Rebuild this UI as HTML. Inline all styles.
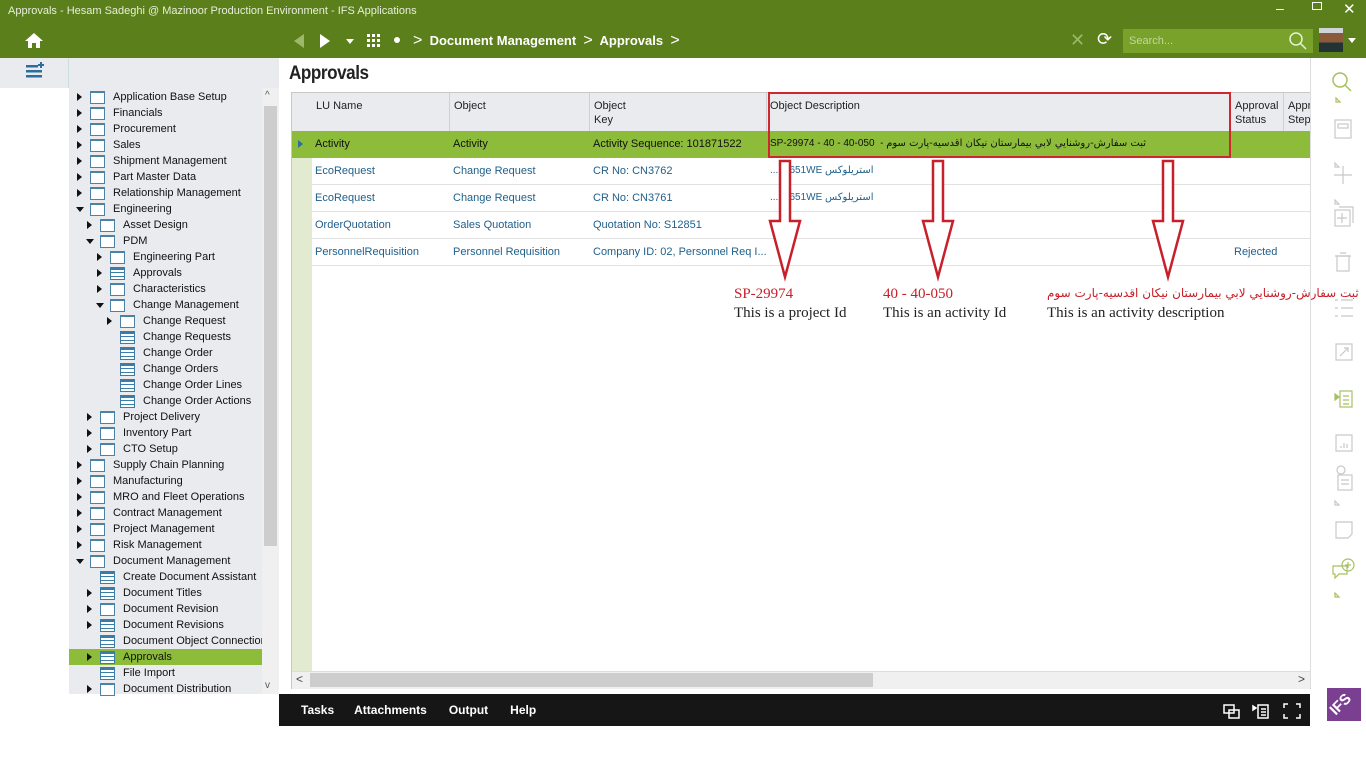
<!DOCTYPE html>
<html><head><meta charset="utf-8"><style>
*{margin:0;padding:0;box-sizing:border-box}
body{width:1366px;height:768px;position:relative;overflow:hidden;background:#fff;font-family:"Liberation Sans",Arial,sans-serif;font-size:11px;color:#222}
.abs{position:absolute}
#top{left:0;top:0;width:1366px;height:58px;background:#5b7f1a}
#tree{left:69px;top:88px;width:210px;height:606px;background:#e9ebee}
.ti{position:absolute;height:16px;line-height:16px;white-space:nowrap;font-size:11px;color:#111}
.ti .ar{position:absolute;top:4px;width:0;height:0;border-top:4px solid transparent;border-bottom:4px solid transparent;border-left:5px solid #111}
.ti .dn{position:absolute;top:6px;width:0;height:0;border-left:4px solid transparent;border-right:4px solid transparent;border-top:5px solid #111}
.ti .fo{position:absolute;top:2px;width:15px;height:13px;border:1px solid #4a82a8;border-top-width:2px;background:#fff}
.ti .fm{position:absolute;top:2px;width:15px;height:13px;border:1px solid #3a7ea8;border-top-width:3px;background:repeating-linear-gradient(#fff 0 2px,#3a7ea8 2px 3px,#fff 3px 4px)}
.grid{left:291px;top:92px;width:1020px;height:597px;border:1px solid #c8c8c8;background:#fff}
.hc{position:absolute;top:0;height:38px;background:#e9ebee;border-right:1px solid #d0d0d0;padding:6px 4px;line-height:14px;font-size:11px}
.row{position:absolute;left:20px;width:998px;height:27px;border-bottom:1px solid #e2e2e2;line-height:26px;color:#1f5f8a}
.row span{position:absolute;white-space:nowrap}
.ar2{font-family:"DejaVu Sans",sans-serif;font-size:10px;unicode-bidi:isolate}
.ann{font-family:"Liberation Serif",serif;font-size:15px;position:absolute;white-space:nowrap}
.red{color:#c8202a}
</style></head><body>
<div id="top" class="abs"></div>
<div class="abs" style="left:8px;top:5px;color:#e8eedc;font-size:11px">Approvals - Hesam Sadeghi @ Mazinoor Production Environment - IFS Applications</div>
<div class="abs" style="left:1276px;top:0;color:#fff;font-size:14px">–</div>
<div class="abs" style="left:1312px;top:2px;width:10px;height:8px;border:1.5px solid #fff"></div>
<div class="abs" style="left:1343px;top:0;color:#fff;font-size:15px">✕</div>
<svg class="abs" style="left:24px;top:32px" width="20" height="16"><path d="M10 1L1 9h3v7h4v-5h4v5h4V9h3z" fill="#fff"/></svg>
<svg class="abs" style="left:290px;top:32px" width="90" height="18"><path d="M14 2L4 9l10 7z" fill="#9db86a"/><path d="M30 2l10 7-10 7z" fill="#fff"/><path d="M56 7h8l-4 5z" fill="#fff"/><g fill="#fff"><rect x="77" y="2" width="3" height="3"/><rect x="82" y="2" width="3" height="3"/><rect x="87" y="2" width="3" height="3"/><rect x="77" y="7" width="3" height="3"/><rect x="82" y="7" width="3" height="3"/><rect x="87" y="7" width="3" height="3"/><rect x="77" y="12" width="3" height="3"/><rect x="82" y="12" width="3" height="3"/><rect x="87" y="12" width="3" height="3"/></g></svg>
<div class="abs" style="left:394px;top:37px;width:6px;height:6px;border-radius:3px;background:#fff"></div>
<div class="abs" style="left:413px;top:32px;color:#fff;font-size:13px;font-weight:bold;white-space:nowrap"><span style="font-weight:normal;font-size:16px">&gt;</span>&nbsp; Document Management &nbsp;<span style="font-weight:normal;font-size:16px">&gt;</span>&nbsp; Approvals &nbsp;<span style="font-weight:normal;font-size:16px">&gt;</span></div>
<div class="abs" style="left:1070px;top:30px;color:#9db86a;font-size:18px">✕</div>
<div class="abs" style="left:1097px;top:29px;color:#fff;font-size:18px">⟳</div>
<div class="abs" style="left:1123px;top:29px;width:190px;height:24px;background:#78a22a"></div>
<div class="abs" style="left:1129px;top:35px;color:#c4d89c;font-size:11px">Search...</div>
<svg class="abs" style="left:1288px;top:31px" width="20" height="20"><circle cx="8" cy="8" r="6" fill="none" stroke="#e8f0d8" stroke-width="1.5"/><path d="M12 12l6 6" stroke="#e8f0d8" stroke-width="1.5"/></svg>
<div class="abs" style="left:1319px;top:28px;width:24px;height:24px;background:linear-gradient(#cfd4d8 0 20%,#8a5a3a 20% 60%,#233 60%)"></div>
<div class="abs" style="left:1348px;top:38px;border-left:4px solid transparent;border-right:4px solid transparent;border-top:5px solid #fff"></div>
<div class="abs" style="left:0;top:58px;width:1366px;height:30px;background:#fff"></div>
<div class="abs" style="left:0;top:58px;width:279px;height:30px;background:#e9ebee"></div>
<div class="abs" style="left:68px;top:58px;width:1px;height:30px;background:#cdd"></div>
<svg class="abs" style="left:26px;top:62px" width="18" height="18"><g fill="#2a6f9e"><rect x="0" y="3" width="12" height="2.5"/><rect x="0" y="8" width="16" height="2.5"/><rect x="0" y="13" width="16" height="2.5"/><path d="M14 0h2v2h2v2h-2v2h-2V4h-2V2h2z"/></g></svg>
<div class="abs" style="left:289px;top:63px;font-size:19px;font-weight:bold;color:#222;letter-spacing:-0.5px;transform:scaleX(0.9);transform-origin:left">Approvals</div>
<div id="tree" class="abs">
<div class="abs" style="left:193px;top:0;width:17px;height:606px;background:#f0f0f0"></div>
<div class="abs" style="left:195px;top:18px;width:13px;height:440px;background:#cdcdcd"></div>
<div class="abs" style="left:196px;top:2px;font-size:10px;color:#555">^</div>
<div class="abs" style="left:196px;top:592px;font-size:10px;color:#555">v</div>
<div class="abs" style="left:0;top:561px;width:193px;height:16px;background:#8dbb3a"></div>
</div>
<div id="ti"></div>
<div class="grid abs">
<div class="hc" style="left:0;width:20px;border-right:none"></div>
<div class="hc" style="left:20px;width:138px">LU Name</div>
<div class="hc" style="left:158px;width:140px">Object</div>
<div class="hc" style="left:298px;width:177px">Object<br>Key</div>
<div class="hc" style="left:475px;width:464px;padding-left:3px">Object Description</div>
<div class="hc" style="left:939px;width:53px">Approval<br>Status</div>
<div class="hc" style="left:992px;width:27px;overflow:hidden;border-right:none;white-space:nowrap">Appr<br>Step</div>
<div class="abs" style="left:0;top:38px;width:20px;height:540px;background:#e2ebd0"></div>
<div class="abs" style="left:0;top:38px;width:1018px;height:27px;background:#8dbb3a"></div>
<div class="abs" style="left:6px;top:47px;border-top:4px solid transparent;border-bottom:4px solid transparent;border-left:5px solid #2a6f9e"></div>
<div class="row" style="top:38px;color:#111;border-bottom:none"><span style="left:458px;font-size:10px">SP-29974 - 40 - 40-050 &nbsp;- <bdi class="ar2">ثبت سفارش-روشنايي لابي بيمارستان نيكان اقدسيه-پارت سوم</bdi></span><span style="left:3px">Activity</span><span style="left:141px">Activity</span><span style="left:281px">Activity Sequence: 101871522</span></div>
<div class="row" style="top:65px"><span style="left:3px">EcoRequest</span><span style="left:141px">Change Request</span><span style="left:281px">CR No: CN3762</span><span style="left:458px;font-size:10px">... M651WE <bdi class="ar2">استريلوكس</bdi></span></div>
<div class="row" style="top:92px"><span style="left:3px">EcoRequest</span><span style="left:141px">Change Request</span><span style="left:281px">CR No: CN3761</span><span style="left:458px;font-size:10px">... M651WE <bdi class="ar2">استريلوكس</bdi></span></div>
<div class="row" style="top:119px"><span style="left:3px">OrderQuotation</span><span style="left:141px">Sales Quotation</span><span style="left:281px">Quotation No: S12851</span></div>
<div class="row" style="top:146px"><span style="left:3px">PersonnelRequisition</span><span style="left:141px">Personnel Requisition</span><span style="left:281px">Company ID: 02, Personnel Req I...</span><span style="left:922px">Rejected</span></div>
<div class="abs" style="left:0;top:578px;width:1018px;height:18px;background:#f0f0f0;border-top:1px solid #ddd"></div>
<div class="abs" style="left:18px;top:580px;width:563px;height:14px;background:#cdcdcd"></div>
<div class="abs" style="left:4px;top:579px;font-size:12px;color:#444">&lt;</div>
<div class="abs" style="left:1006px;top:579px;font-size:12px;color:#444">&gt;</div>
</div>
<div class="abs" style="left:768px;top:92px;width:463px;height:66px;border:2px solid #d0262d"></div>
<svg class="abs" style="left:760px;top:158px" width="440" height="125"><g fill="#fff" stroke="#c8202a" stroke-width="2.5"><path d="M20 3h10v60h10l-15 56-15-56h10z"/><path d="M173 3h10v60h10l-15 56-15-56h10z"/><path d="M403 3h10v60h10l-15 56-15-56h10z"/></g></svg>
<div class="ann red" style="left:734px;top:286px">SP-29974</div>
<div class="ann" style="left:734px;top:305px">This is a project Id</div>
<div class="ann red" style="left:883px;top:286px">40 - 40-050</div>
<div class="ann" style="left:883px;top:305px">This is an activity Id</div>
<div class="ann red" style="left:1047px;top:286px;font-family:'DejaVu Sans',sans-serif;font-size:12px">ثبت سفارش-روشنايي لابي بيمارستان نيكان اقدسيه-پارت سوم</div>
<div class="ann" style="left:1047px;top:305px">This is an activity description</div>
<svg class="abs" style="left:1311px;top:60px" width="55" height="540" fill="none" stroke="#c8c8c8" stroke-width="1.2">
<circle cx="29" cy="20" r="7" stroke="#a6c160" stroke-width="1.5"/><path d="M34 25l6 6" stroke="#a6c160" stroke-width="1.5"/>
<path d="M25 38l4 4h-4z" stroke="#a6c160"/>
<rect x="24" y="60" width="16" height="18"/><rect x="27" y="64" width="10" height="4"/>
<path d="M24 103l4 4h-4z"/><path d="M32 106v18M23 115h18"/>
<path d="M24 140l4 4h-4z"/><rect x="24" y="150" width="15" height="16"/><path d="M28 147h14v16"/><path d="M31 153v10M26 158h10"/>
<rect x="26" y="196" width="12" height="15"/><path d="M24 196h16M29 193h6"/>
<path d="M24 240h3M30 240h12M24 248h3M30 248h12M24 256h3M30 256h12"/>
<rect x="25" y="284" width="16" height="16"/><path d="M29 296l8-8M33 288h4v4"/>
<g stroke="#a6c160"><rect x="29" y="331" width="12" height="16"/><path d="M32 336h6M32 340h6M32 344h6"/><path d="M24 334l4 3-4 3z" fill="#a6c160"/></g>
<rect x="25" y="375" width="16" height="16"/><path d="M30 386v2M33 383v5M36 384v4"/>
<circle cx="30" cy="410" r="4"/><rect x="27" y="415" width="14" height="15"/><path d="M30 420h8M30 424h8"/>
<path d="M24 441l4 4h-4z"/><path d="M25 462h16v12l-4 4H25z"/>
<g stroke="#a6c160"><path d="M22 506h14v8h-8l-4 4v-4h-2z"/><circle cx="37" cy="505" r="6"/><path d="M37 502v6M34 505h6"/><path d="M24 533l4 4h-4z"/></g>
</svg>
<div class="abs" style="left:1310px;top:58px;width:1px;height:630px;background:#ddd"></div>
<div class="abs" style="left:279px;top:694px;width:1031px;height:32px;background:#161616"></div>
<div class="abs" style="left:301px;top:703px;color:#fff;font-size:12px;font-weight:bold">Tasks<span style="margin-left:20px">Attachments</span><span style="margin-left:22px">Output</span><span style="margin-left:22px">Help</span></div>
<svg class="abs" style="left:1222px;top:702px" width="80" height="18" fill="none" stroke="#fff" stroke-width="1.5"><rect x="2" y="3" width="10" height="8"/><rect x="7" y="8" width="10" height="8"/><rect x="36" y="3" width="10" height="13"/><path d="M39 7h5M39 10h5M39 13h5"/><path d="M31 4l3 2-3 2z" fill="#fff"/><path d="M62 6V2h4M74 2h4v4M78 12v4h-4M66 16h-4v-4"/></svg>
<div class="abs" style="left:1327px;top:688px;width:34px;height:33px;background:#7b3f91;overflow:hidden"><div style="position:absolute;left:2px;top:8px;color:#fff;font-weight:bold;font-size:15px;transform:rotate(-45deg)">IFS</div></div>
<script>
var items=[[0,1,'f','Application Base Setup'],[0,1,'f','Financials'],[0,1,'f','Procurement'],[0,1,'f','Sales'],[0,1,'f','Shipment Management'],[0,1,'f','Part Master Data'],[0,1,'f','Relationship Management'],[0,2,'f','Engineering'],[1,1,'f','Asset Design'],[1,2,'f','PDM'],[2,1,'f','Engineering Part'],[2,1,'m','Approvals'],[2,1,'f','Characteristics'],[2,2,'f','Change Management'],[3,1,'f','Change Request'],[3,0,'m','Change Requests'],[3,0,'m','Change Order'],[3,0,'m','Change Orders'],[3,0,'m','Change Order Lines'],[3,0,'m','Change Order Actions'],[1,1,'f','Project Delivery'],[1,1,'f','Inventory Part'],[1,1,'f','CTO Setup'],[0,1,'f','Supply Chain Planning'],[0,1,'f','Manufacturing'],[0,1,'f','MRO and Fleet Operations'],[0,1,'f','Contract Management'],[0,1,'f','Project Management'],[0,1,'f','Risk Management'],[0,2,'f','Document Management'],[1,0,'m','Create Document Assistant'],[1,1,'m','Document Titles'],[1,1,'f','Document Revision'],[1,1,'m','Document Revisions'],[1,0,'m','Document Object Connection'],[1,1,'m','Approvals'],[1,0,'m','File Import'],[1,1,'f','Document Distribution']];
var h='';items.forEach(function(it,i){var x=76+it[0]*10,y=89+i*16;var a=it[1]==1?'<i class="ar" style="left:1px"></i>':it[1]==2?'<i class="dn" style="left:0"></i>':'';
h+='<div class="ti" style="left:'+x+'px;top:'+y+'px;width:'+(186-it[0]*10)+'px;overflow:hidden">'+a+'<i class="'+(it[2]=='f'?'fo':'fm')+'" style="left:14px"></i><span style="position:absolute;left:37px">'+it[3]+'</span></div>';});
document.getElementById('ti').innerHTML=h;
</script>
</body></html>
